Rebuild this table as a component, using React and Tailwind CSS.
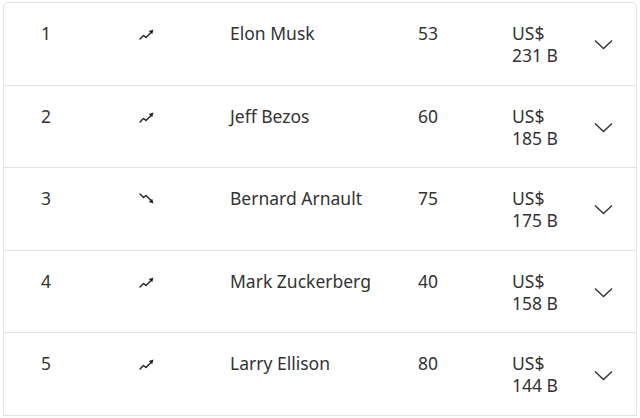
import React from "react";

const people = [
  { rank: 1, trend: "up", name: "Elon Musk", age: 53, worth: "231 B" },
  { rank: 2, trend: "up", name: "Jeff Bezos", age: 60, worth: "185 B" },
  { rank: 3, trend: "down", name: "Bernard Arnault", age: 75, worth: "175 B" },
  { rank: 4, trend: "up", name: "Mark Zuckerberg", age: 40, worth: "158 B" },
  { rank: 5, trend: "up", name: "Larry Ellison", age: 80, worth: "144 B" },
];

const TrendIcon = ({ dir }) => (
  <svg width="18" height="14" viewBox="0 0 18 14" className={dir === "down" ? "-scale-y-100" : ""}>
    <polyline points="2,12 5.5,8.5 8,10.5 12.5,6" fill="none" stroke="#222" strokeWidth="1.4" strokeLinejoin="round" strokeLinecap="round" />
    <polygon points="10.8,4 15.5,2.5 14.2,7.2" fill="#222" />
  </svg>
);

const Chevron = () => (
  <svg width="19" height="11" viewBox="0 0 19 11">
    <polyline points="1,1.5 9.5,9.5 18,1.5" fill="none" stroke="#333" strokeWidth="1.4" />
  </svg>
);

export default function App() {
  return (
    <div className="bg-white w-[640px] h-[418px] pt-[2px] pl-[3px] pr-[3px] font-['Noto_Sans',sans-serif] text-[17.5px] text-[#333]">
      <div className="border border-[#e3e3e3] rounded-t-[5px] border-b-0">
        {people.map((p) => (
          <div key={p.rank} className="flex h-[82.6px] border-b border-[#e3e3e3] leading-[22px]">
            <div className="w-[134px] pl-[37px] pt-[19px]">{p.rank}</div>
            <div className="w-[92px] pt-[24px]">
              <TrendIcon dir={p.trend} />
            </div>
            <div className="w-[188px] pt-[19px]">{p.name}</div>
            <div className="w-[94px] pt-[19px]">{p.age}</div>
            <div className="w-[82px] pt-[19px]">
              <div>US$</div>
              <div>{p.worth}</div>
            </div>
            <div className="flex items-center pt-[2px]">
              <Chevron />
            </div>
          </div>
        ))}
      </div>
    </div>
  );
}
